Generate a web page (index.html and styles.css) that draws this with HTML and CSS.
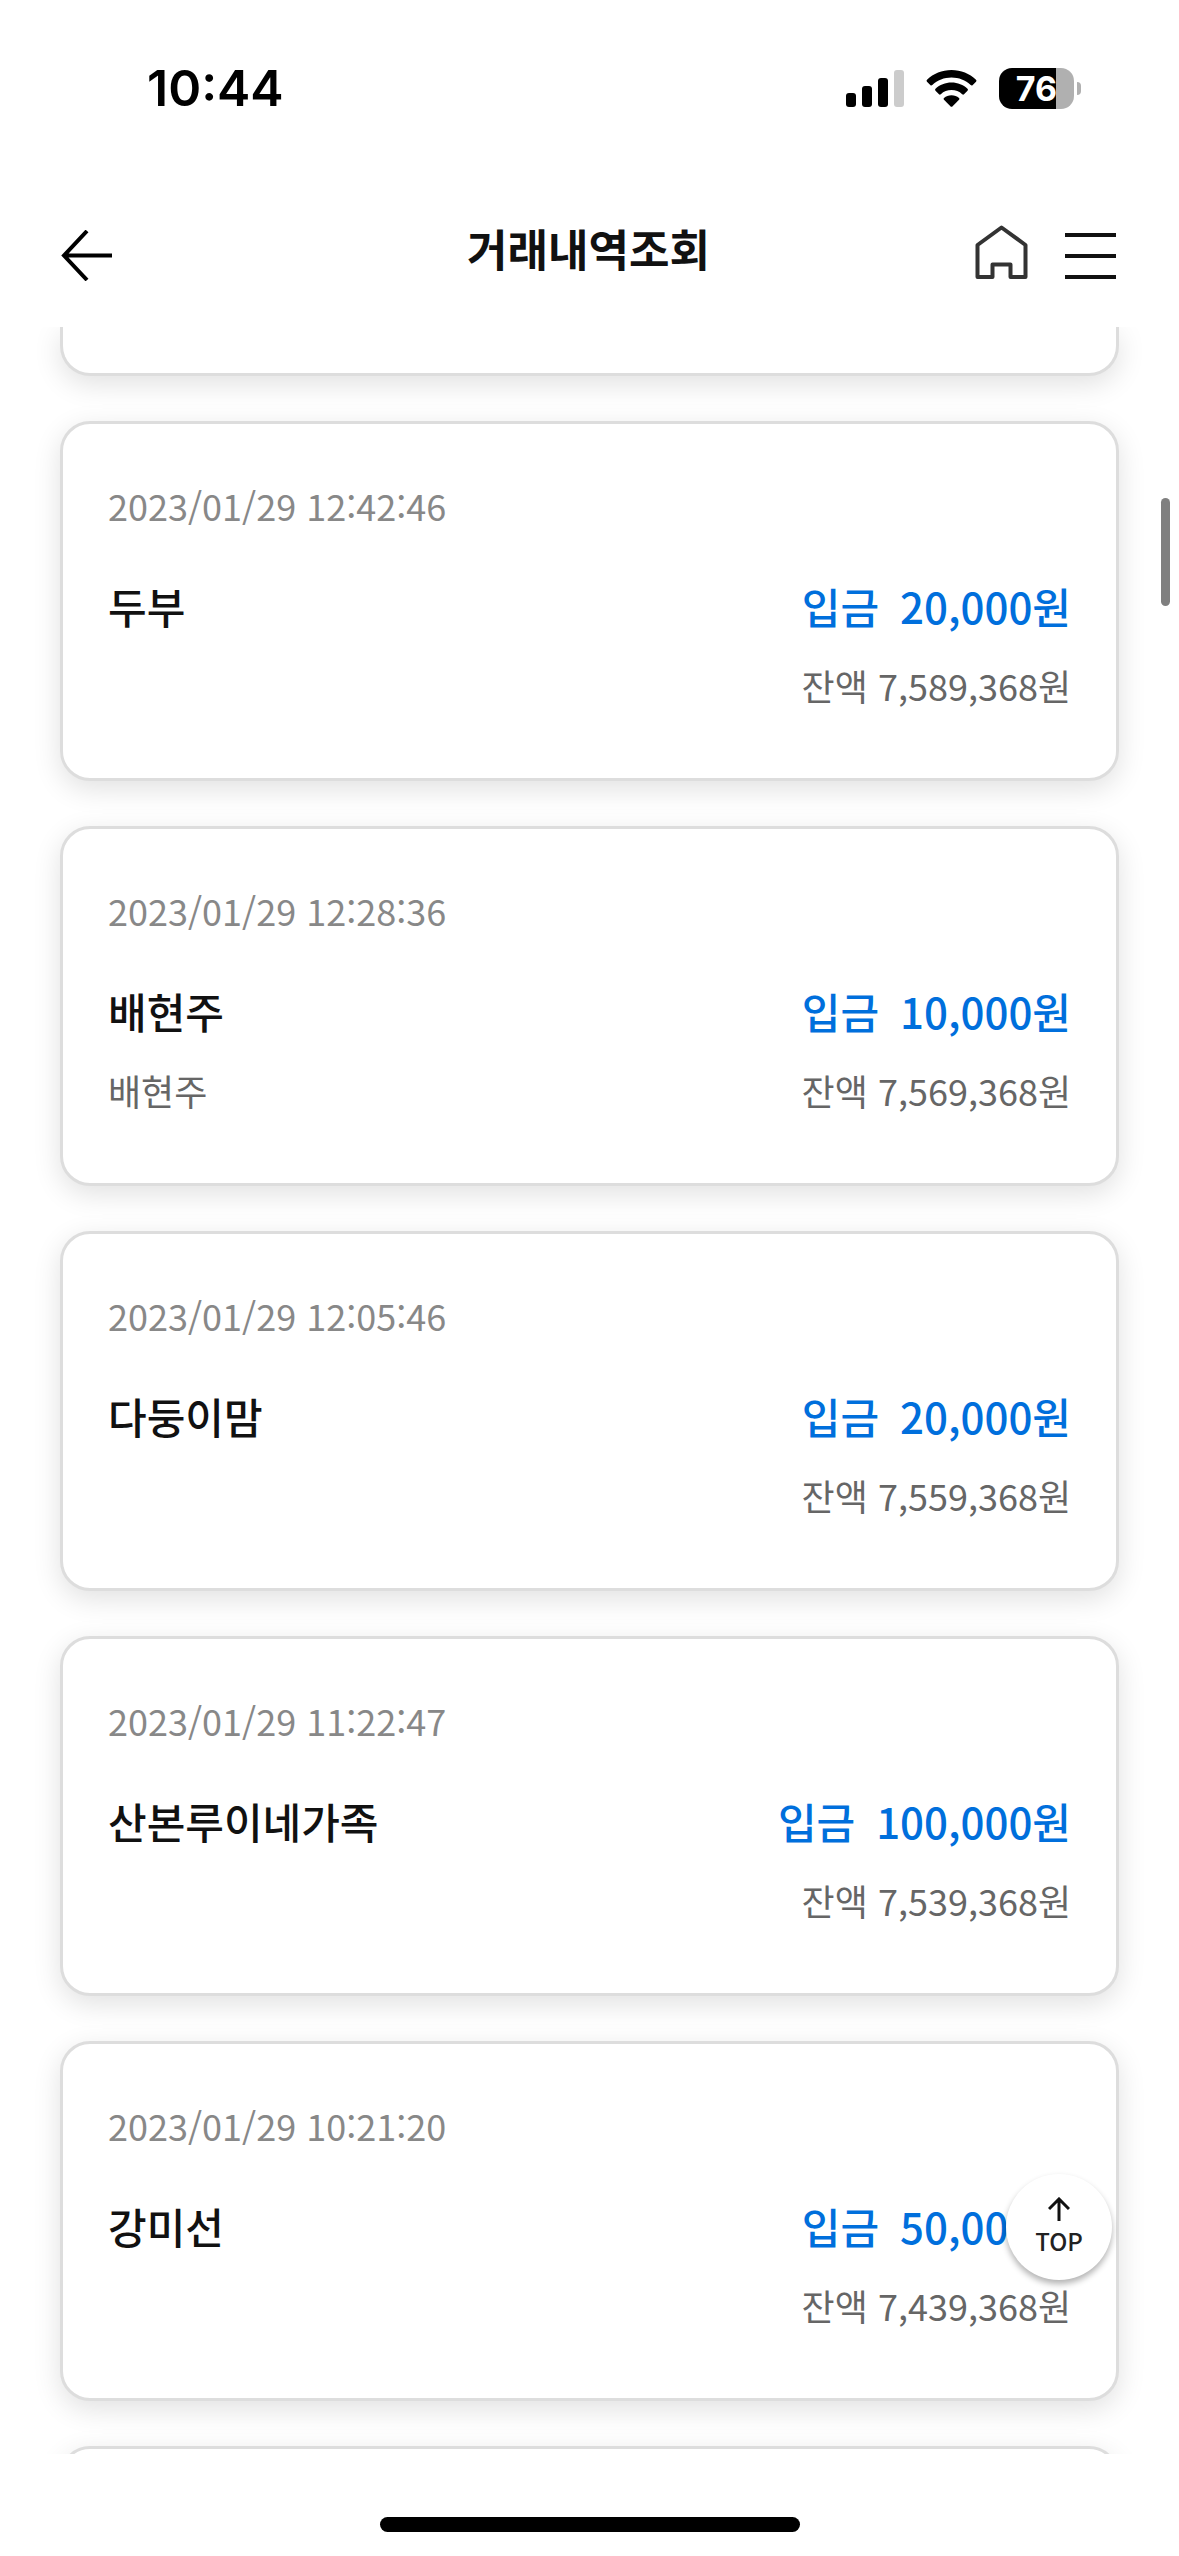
FILE: index.html
```html
<!DOCTYPE html>
<html lang="ko">
<head>
<meta charset="utf-8">
<meta name="viewport" content="width=device-width, initial-scale=1">
<title>거래내역조회</title>
<link rel="stylesheet" href="styles.css">
</head>
<body>
<div class="status-bar">
  <span class="clock">10:44</span>
  <div class="status-icons">
    <svg class="signal" width="58" height="37" viewBox="0 0 58 37" aria-hidden="true">
      <rect x="0" y="23" width="10" height="14" rx="3"/>
      <rect x="16" y="16" width="10" height="21" rx="3"/>
      <rect x="32" y="8" width="10" height="29" rx="3"/>
      <rect x="48" y="0" width="10" height="37" rx="3" fill="#ccc"/>
    </svg>
    <svg class="wifi" width="51" height="37" viewBox="0 0 51 37" aria-hidden="true">
      <path d="M25.500 0C35 0 43.500 3.600 50 9.700Q51 10.800 50 11.800L46.500 15.200Q45.700 16 44.700 15.100C39.500 10.200 32.800 7.500 25.500 7.500S11.500 10.200 6.300 15.100Q5.300 16 4.500 15.200L1 11.800Q0 10.800 1 9.700C7.500 3.600 16 0 25.500 0Z"/>
      <path d="M25.500 12.600C31.700 12.600 37.300 14.900 41.500 18.700Q42.500 19.800 41.500 20.800L38 24.300Q37.200 25 36.200 24.200C33.300 21.600 29.600 20.100 25.500 20.100S17.700 21.600 14.800 24.200Q13.800 25 13 24.300L9.500 20.800Q8.500 19.800 9.500 18.700C13.700 14.900 19.300 12.600 25.500 12.600Z"/>
      <path d="M25.500 25.300C28.400 25.300 31 26.200 33 27.900Q33.800 28.800 33 29.700L26.600 36.300Q25.500 37.300 24.400 36.300L18 29.700Q17.200 28.800 18 27.900C20 26.200 22.600 25.300 25.500 25.300Z"/>
    </svg>
    <div class="battery"><span class="battery-body">76</span><span class="battery-tip"></span></div>
  </div>
</div>

<header class="app-header">
  <button class="back-button" type="button" aria-label="뒤로">
    <svg width="51" height="51" viewBox="0 0 51 51" fill="none" stroke="#000" stroke-width="4" aria-hidden="true">
      <path d="M51 25.500H3M26 1L3 25.500L26 50"/>
    </svg>
  </button>
  <h1 class="title">거래내역조회</h1>
  <div class="header-actions">
    <button type="button" aria-label="홈">
      <svg width="53" height="54" viewBox="0 0 53 54" fill="none" stroke="#333" stroke-width="4" stroke-linejoin="round" aria-hidden="true">
        <path d="M2.500 20L26.500 2.500L50.500 20V52H35.500V39.500H17.500V52H2.500Z"/>
      </svg>
    </button>
    <button type="button" aria-label="메뉴">
      <svg width="51" height="46" viewBox="0 0 51 46" fill="#111" aria-hidden="true">
        <rect y="0" width="51" height="4"/><rect y="21" width="51" height="4"/><rect y="42" width="51" height="4"/>
      </svg>
    </button>
  </div>
</header>

<main class="content">
  <ul class="cards">
    <li class="card card-tail"></li>
    <li class="card">
      <time class="date">2023/01/29 12:42:46</time>
      <strong class="name">두부</strong>
      <span class="amount"><span>입금</span><span>20,000원</span></span>
      <span class="balance">잔액 7,589,368원</span>
    </li>
    <li class="card">
      <time class="date">2023/01/29 12:28:36</time>
      <strong class="name">배현주</strong>
      <span class="amount"><span>입금</span><span>10,000원</span></span>
      <span class="memo">배현주</span>
      <span class="balance">잔액 7,569,368원</span>
    </li>
    <li class="card">
      <time class="date">2023/01/29 12:05:46</time>
      <strong class="name">다둥이맘</strong>
      <span class="amount"><span>입금</span><span>20,000원</span></span>
      <span class="balance">잔액 7,559,368원</span>
    </li>
    <li class="card">
      <time class="date">2023/01/29 11:22:47</time>
      <strong class="name">산본루이네가족</strong>
      <span class="amount"><span>입금</span><span>100,000원</span></span>
      <span class="balance">잔액 7,539,368원</span>
    </li>
    <li class="card">
      <time class="date">2023/01/29 10:21:20</time>
      <strong class="name">강미선</strong>
      <span class="amount"><span>입금</span><span>50,000원</span></span>
      <span class="balance">잔액 7,439,368원</span>
    </li>
    <li class="card"></li>
  </ul>
  <span class="scroll-thumb"></span>
  <button class="top-button" type="button">
    <svg width="22" height="24" viewBox="0 0 22 24" fill="none" stroke="#111" stroke-width="3" aria-hidden="true">
      <path d="M11 24V2M1 12L11 2L21 12"/>
    </svg>
    <span>TOP</span>
  </button>
</main>

<footer class="home-area"><span class="home-indicator"></span></footer>
</body>
</html>
```
FILE: styles.css
```css
* {
  box-sizing: border-box;
}

body {
  margin: 0;
  height: 100vh;
  display: flex;
  flex-direction: column;
  overflow: hidden;
  background: #fff;
  color: #111;
  font-family: "Noto Sans CJK KR", sans-serif;
}

button {
  padding: 0;
  border: 0;
  background: none;
  color: inherit;
  font: inherit;
}

svg {
  display: block;
}

.status-bar {
  flex: none;
  display: flex;
  align-items: center;
  justify-content: space-between;
  padding: 58px 98px 58px 147px;
  color: #000;
}

.clock {
  font: 600 50px/60px Inter, sans-serif;
}

.status-icons {
  display: flex;
  align-items: center;
  gap: 22px;
}

.battery {
  display: flex;
  align-items: center;
  gap: 3px;
}

.battery-body {
  width: 75px;
  height: 41px;
  border-radius: 13px;
  background: linear-gradient(to right, #000 57px, #b0b0b0 57px);
  color: #fff;
  font: 700 34px/41px Inter, sans-serif;
  text-align: center;
}

.battery-tip {
  width: 4px;
  height: 13px;
  border-radius: 0 4px 4px 0;
  background: #b0b0b0;
}

.app-header {
  flex: none;
  display: grid;
  grid-template-columns: 1fr auto 1fr;
  align-items: center;
  height: 151px;
  padding: 0 63px 0 61px;
}

.back-button {
  justify-self: start;
  margin-top: 8px;
}

.title {
  margin: 0 0 8px;
  font-size: 44px;
  line-height: 64px;
  font-weight: 700;
}

.header-actions {
  display: flex;
  align-items: flex-end;
  justify-content: flex-end;
  gap: 37px;
}

.content {
  position: relative;
  flex: 1;
  min-height: 0;
  overflow: hidden;
}

.cards {
  display: flex;
  flex-direction: column;
  gap: 45px;
  margin: 0;
  padding: 0 60px;
  list-style: none;
}

.card {
  display: grid;
  grid-template-columns: 1fr auto;
  align-content: start;
  row-gap: 22px;
  min-height: 360px;
  padding: 54px 45px;
  border: 3px solid #ddd;
  border-radius: 30px;
  background: #fff;
  box-shadow: 0 8px 28px rgba(0, 0, 0, 0.12);
}

/* Bottom edge of the entry that has scrolled under the header. */
.card-tail {
  min-height: 49px;
  padding: 0;
  border-top: 0;
  border-radius: 0 0 30px 30px;
}

.date {
  grid-column: 1 / -1;
  margin-bottom: 22px;
  color: #888;
  font-size: 36px;
  line-height: 54px;
}

.name {
  font-size: 42px;
  line-height: 60px;
  font-weight: 500;
}

.amount {
  display: flex;
  justify-content: flex-end;
  gap: 21px;
  color: #006fdc;
  font-size: 42px;
  line-height: 60px;
  font-weight: 500;
}

.memo,
.balance {
  color: #666;
  font-size: 36px;
  line-height: 54px;
}

.balance {
  grid-column: 2;
  text-align: right;
}

.scroll-thumb {
  position: absolute;
  top: 171px;
  right: 9px;
  width: 9px;
  height: 108px;
  border-radius: 5px;
  background: #7f7f7f;
}

.top-button {
  position: absolute;
  right: 67px;
  bottom: 174px;
  width: 106px;
  height: 106px;
  display: flex;
  flex-direction: column;
  align-items: center;
  justify-content: center;
  gap: 4px;
  border-radius: 50%;
  background: #fff;
  box-shadow: 0 4px 6px rgba(0, 0, 0, 0.3);
  color: #222;
  font-size: 24px;
  line-height: 32px;
  font-weight: 500;
}

.home-area {
  flex: none;
  display: flex;
  justify-content: center;
  padding: 63px 0 24px;
}

.home-indicator {
  width: 36%;
  max-width: 420px;
  height: 15px;
  border-radius: 8px;
  background: #000;
}
```
